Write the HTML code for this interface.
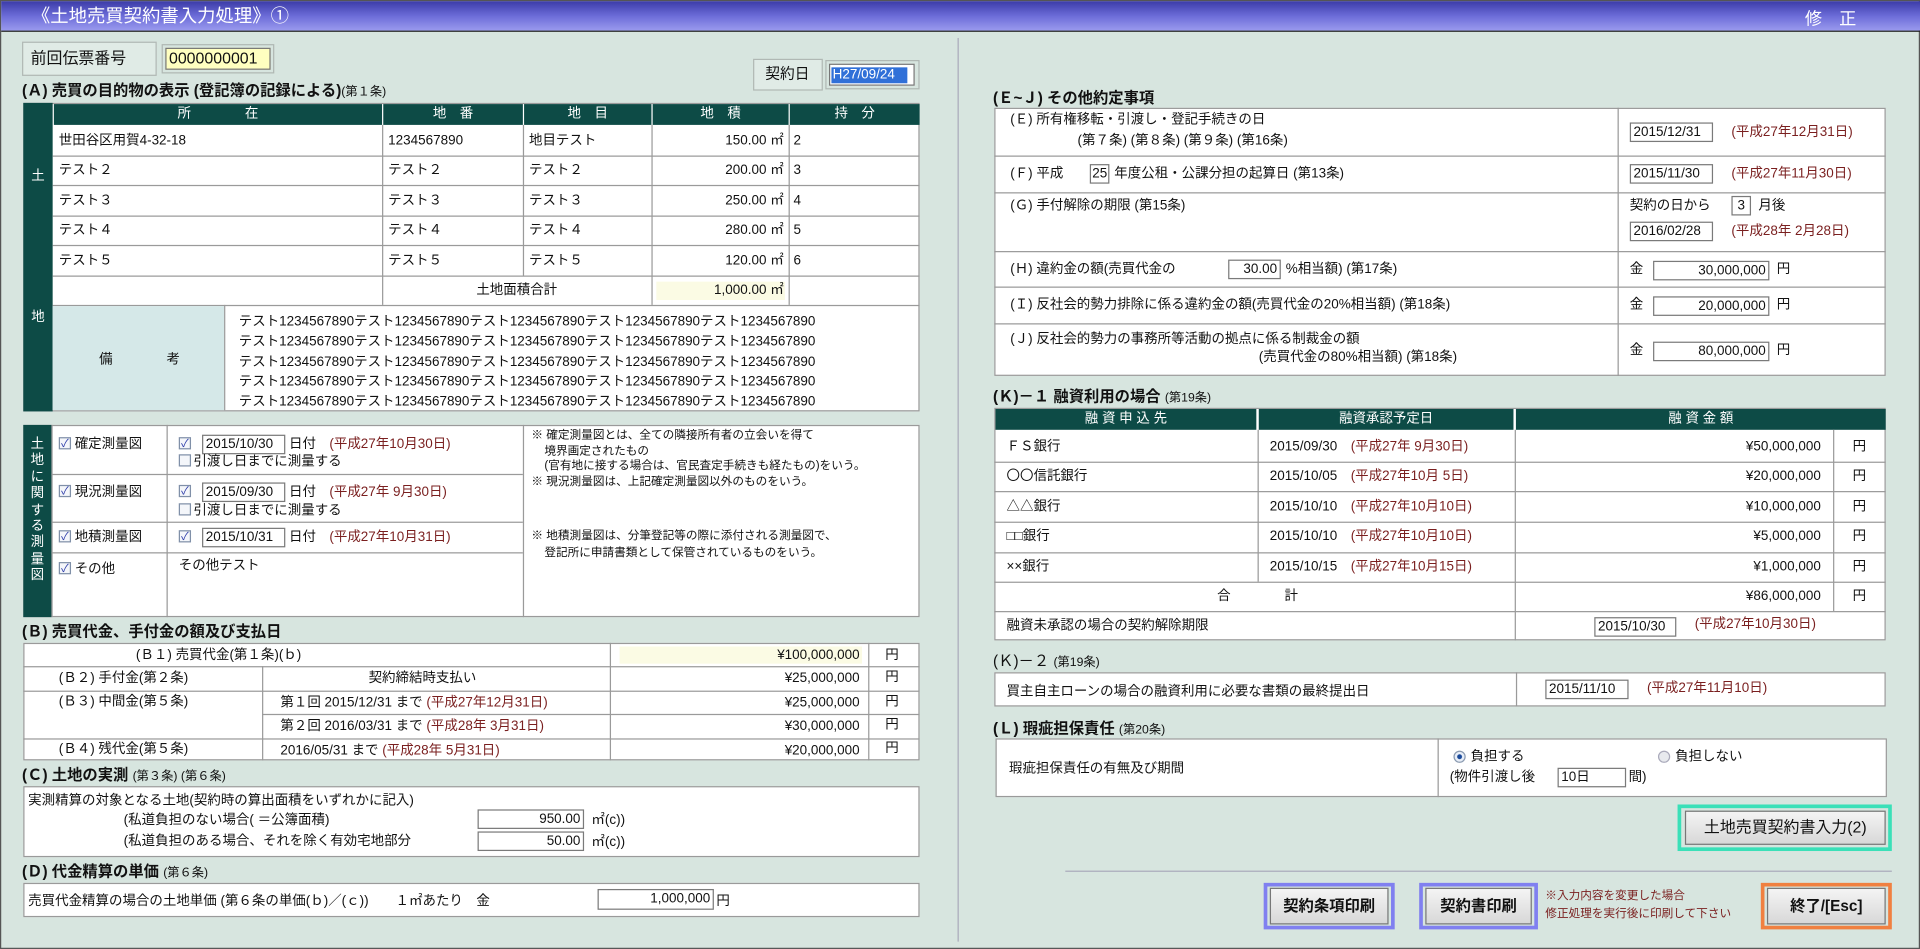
<!DOCTYPE html>
<html><head><meta charset="utf-8"><style>
*{margin:0;padding:0;box-sizing:border-box}
html,body{width:1920px;height:949px;overflow:hidden;background:#d7e5df}
#w{position:absolute;left:0;top:0;width:1568px;height:775px;transform:scale(1.22449);transform-origin:0 0;background:#d7e5df;font-family:"Liberation Sans","Noto Sans CJK JP",sans-serif;color:#111;border:1px solid #555}
.a{position:absolute}
.t{position:absolute;white-space:nowrap;font-size:11px;line-height:12px}
.h{position:absolute;white-space:nowrap;font-size:12.5px;line-height:14px;font-weight:bold}
.h small{font-size:10px;font-weight:normal}
.r{color:#7a1f1f}
.wb{position:absolute;background:#fff;border:1px solid #9a9a9a}
.hl{position:absolute;height:1px;background:#9a9a9a}
.vl{position:absolute;width:1px;background:#9a9a9a}
.tl{position:absolute;background:#0d4b46}
.ht{position:absolute;color:#fff;font-size:11px;line-height:18px;text-align:center}
.in{position:absolute;background:#fff;border:1px solid #7a7a7a;font-size:11px;line-height:14px;padding:0 2px;white-space:nowrap}
.cb{position:absolute;width:10px;height:10px;border:1px solid #8090a8;background:#f4f6fa;font-size:9px;line-height:8px;color:#2a3aa8;text-align:center}
.rt{position:absolute;white-space:nowrap;font-size:11px;line-height:12px;text-align:right}
.btn{position:absolute;background:linear-gradient(#f4f4f4,#d8d8d8);border:1px solid #777;font-size:12.5px;font-weight:bold;text-align:center}
</style></head><body><div id="w">
<!-- title -->
<div class="a" style="left:0;top:0;width:1568px;height:25px;background:linear-gradient(#3c3ca8,#6c6cd8 50%,#9a9aee);border-bottom:1px solid #222"></div>
<div class="a" style="left:25px;top:4px;color:#fff;font-size:15px;line-height:17px;white-space:nowrap">《土地売買契約書入力処理》①</div>
<div class="a" style="left:1473px;top:6px;color:#fff;font-size:14px;line-height:16px;white-space:nowrap">修　正</div>
<div class="vl" style="left:781px;top:30px;height:738px;background:#aab"></div>

<!-- header inputs -->
<div class="a" style="left:17px;top:33px;width:110px;height:28px;border:1px solid #b0b8b4;background:#e0ebe6"></div>
<div class="t" style="left:24px;top:40px;font-size:13px;line-height:14px">前回伝票番号</div>
<div class="a" style="left:131px;top:35px;width:92px;height:24px;border:1px solid #b0b8b4"></div>
<div class="a" style="left:134px;top:38px;width:86px;height:18px;background:#ffffc0;border:1px solid #777;font-size:13px;line-height:16px;padding-left:2px">0000000001</div>
<div class="a" style="left:614px;top:47px;width:57px;height:26px;border:1px solid #b0b8b4;background:#e0ebe6"></div>
<div class="t" style="left:624px;top:53px;font-size:12px;line-height:13px">契約日</div>
<div class="a" style="left:673px;top:48px;width:77px;height:24px;border:1px solid #b0b8b4"></div>
<div class="a" style="left:676px;top:51px;width:70px;height:18px;background:#fff;border:1px solid #777"></div>
<div class="a" style="left:678px;top:54px;width:62px;height:13px;background:#3070d8;color:#fff;font-size:11px;line-height:13px;padding-left:1px">H27/09/24</div>

<!-- (A) -->
<div class="h" style="left:17px;top:66px">(Ａ) 売買の目的物の表示 (登記簿の記録による)<small>(第１条)</small></div>
<div class="wb" style="left:18px;top:83px;width:732px;height:252px"></div>
<div class="tl" style="left:18px;top:83px;width:24px;height:252px"></div>
<div class="ht" style="left:18px;top:134px;width:24px">土</div>
<div class="ht" style="left:18px;top:249px;width:24px">地</div>
<div class="tl" style="left:43px;top:84px;width:268px;height:17px"></div>
<div class="tl" style="left:312px;top:84px;width:114px;height:17px"></div>
<div class="tl" style="left:427px;top:84px;width:104px;height:17px"></div>
<div class="tl" style="left:532px;top:84px;width:111px;height:17px"></div>
<div class="tl" style="left:644px;top:84px;width:106px;height:17px"></div>
<div class="ht" style="left:43px;top:83px;width:268px">所　　　　在</div>
<div class="ht" style="left:312px;top:83px;width:114px">地　番</div>
<div class="ht" style="left:427px;top:83px;width:104px">地　目</div>
<div class="ht" style="left:532px;top:83px;width:111px">地　積</div>
<div class="ht" style="left:644px;top:83px;width:106px">持　分</div>
<div class="hl" style="left:42px;top:126px;width:708px"></div>
<div class="hl" style="left:42px;top:150px;width:708px"></div>
<div class="hl" style="left:42px;top:175px;width:708px"></div>
<div class="hl" style="left:42px;top:199px;width:708px"></div>
<div class="hl" style="left:42px;top:224px;width:708px"></div>
<div class="hl" style="left:42px;top:248px;width:708px"></div>
<div class="vl" style="left:311px;top:101px;height:147px"></div>
<div class="vl" style="left:426px;top:101px;height:123px"></div>
<div class="vl" style="left:531px;top:101px;height:147px"></div>
<div class="vl" style="left:643px;top:101px;height:147px"></div>
<div class="t" style="left:47px;top:108px">世田谷区用賀4-32-18</div><div class="t" style="left:316px;top:108px">1234567890</div><div class="t" style="left:431px;top:108px">地目テスト</div><div class="rt" style="left:540px;width:99px;top:108px">150.00 ㎡</div><div class="t" style="left:647px;top:108px">2</div>
<div class="t" style="left:47px;top:132px">テスト２</div><div class="t" style="left:316px;top:132px">テスト２</div><div class="t" style="left:431px;top:132px">テスト２</div><div class="rt" style="left:540px;width:99px;top:132px">200.00 ㎡</div><div class="t" style="left:647px;top:132px">3</div>
<div class="t" style="left:47px;top:157px">テスト３</div><div class="t" style="left:316px;top:157px">テスト３</div><div class="t" style="left:431px;top:157px">テスト３</div><div class="rt" style="left:540px;width:99px;top:157px">250.00 ㎡</div><div class="t" style="left:647px;top:157px">4</div>
<div class="t" style="left:47px;top:181px">テスト４</div><div class="t" style="left:316px;top:181px">テスト４</div><div class="t" style="left:431px;top:181px">テスト４</div><div class="rt" style="left:540px;width:99px;top:181px">280.00 ㎡</div><div class="t" style="left:647px;top:181px">5</div>
<div class="t" style="left:47px;top:206px">テスト５</div><div class="t" style="left:316px;top:206px">テスト５</div><div class="t" style="left:431px;top:206px">テスト５</div><div class="rt" style="left:540px;width:99px;top:206px">120.00 ㎡</div><div class="t" style="left:647px;top:206px">6</div>
<div class="a" style="left:535px;top:229px;width:105px;height:15px;background:#fbfbe4"></div>
<div class="t" style="left:388px;top:230px">土地面積合計</div><div class="rt" style="left:540px;width:99px;top:230px">1,000.00 ㎡</div>
<div class="a" style="left:42px;top:249px;width:140px;height:85px;background:#d5e8e8"></div>
<div class="vl" style="left:182px;top:248px;height:86px"></div>
<div class="t" style="left:80px;top:287px">備　　　　考</div>
<div class="t" style="left:194px;top:254px;line-height:16.3px">テスト1234567890テスト1234567890テスト1234567890テスト1234567890テスト1234567890<br>テスト1234567890テスト1234567890テスト1234567890テスト1234567890テスト1234567890<br>テスト1234567890テスト1234567890テスト1234567890テスト1234567890テスト1234567890<br>テスト1234567890テスト1234567890テスト1234567890テスト1234567890テスト1234567890<br>テスト1234567890テスト1234567890テスト1234567890テスト1234567890テスト1234567890</div>

<!-- survey -->
<div class="wb" style="left:18px;top:346px;width:732px;height:157px"></div>
<div class="tl" style="left:18px;top:346px;width:23px;height:157px"></div>
<div class="a" style="left:18px;top:356px;width:23px;color:#fff;font-size:11px;line-height:13.4px;text-align:center">土<br>地<br>に<br>関<br>す<br>る<br>測<br>量<br>図</div>
<div class="vl" style="left:41px;top:346px;height:157px"></div>
<div class="vl" style="left:135px;top:346px;height:157px"></div>
<div class="vl" style="left:426px;top:346px;height:157px"></div>
<div class="hl" style="left:41px;top:386px;width:385px"></div>
<div class="hl" style="left:41px;top:425px;width:385px"></div>
<div class="hl" style="left:41px;top:450px;width:385px"></div>
<div class="cb" style="left:47px;top:356px">✓</div><div class="t" style="left:60px;top:356px">確定測量図</div>
<div class="cb" style="left:145px;top:356px">✓</div><div class="in" style="left:164px;top:354px;width:68px">2015/10/30</div><div class="t" style="left:235px;top:356px">日付　<span class="r">(平成27年10月30日)</span></div>
<div class="cb" style="left:145px;top:370px"></div><div class="t" style="left:157px;top:370px">引渡し日までに測量する</div>
<div class="cb" style="left:47px;top:395px">✓</div><div class="t" style="left:60px;top:395px">現況測量図</div>
<div class="cb" style="left:145px;top:395px">✓</div><div class="in" style="left:164px;top:393px;width:68px">2015/09/30</div><div class="t" style="left:235px;top:395px">日付　<span class="r">(平成27年 9月30日)</span></div>
<div class="cb" style="left:145px;top:410px"></div><div class="t" style="left:157px;top:410px">引渡し日までに測量する</div>
<div class="cb" style="left:47px;top:432px">✓</div><div class="t" style="left:60px;top:432px">地積測量図</div>
<div class="cb" style="left:145px;top:432px">✓</div><div class="in" style="left:164px;top:430px;width:68px">2015/10/31</div><div class="t" style="left:235px;top:432px">日付　<span class="r">(平成27年10月31日)</span></div>
<div class="cb" style="left:47px;top:458px">✓</div><div class="t" style="left:60px;top:458px">その他</div>
<div class="t" style="left:145px;top:455px">その他テスト</div>
<div class="t" style="left:433px;top:349px;font-size:9.5px;line-height:12.5px">※ 確定測量図とは、全ての隣接所有者の立会いを得て<br>&nbsp;&nbsp;&nbsp;&nbsp;境界画定されたもの<br>&nbsp;&nbsp;&nbsp;&nbsp;(官有地に接する場合は、官民査定手続きも経たもの)をいう。<br>※ 現況測量図は、上記確定測量図以外のものをいう。</div>
<div class="t" style="left:433px;top:430px;font-size:9.5px;line-height:14px">※ 地積測量図は、分筆登記等の際に添付される測量図で、<br>&nbsp;&nbsp;&nbsp;&nbsp;登記所に申請書類として保管されているものをいう。</div>

<!-- (B) -->
<div class="h" style="left:17px;top:508px">(Ｂ) 売買代金、手付金の額及び支払日</div>
<div class="wb" style="left:18px;top:524px;width:732px;height:96px"></div>
<div class="hl" style="left:18px;top:543px;width:732px"></div>
<div class="hl" style="left:18px;top:563px;width:732px"></div>
<div class="hl" style="left:213px;top:582px;width:537px"></div>
<div class="hl" style="left:18px;top:602px;width:732px"></div>
<div class="vl" style="left:213px;top:543px;height:77px"></div>
<div class="vl" style="left:497px;top:524px;height:96px"></div>
<div class="vl" style="left:708px;top:524px;height:96px"></div>
<div class="a" style="left:505px;top:527px;width:198px;height:14px;background:#fbfbe4"></div>
<div class="t" style="left:110px;top:528px">(Ｂ１) 売買代金(第１条)(ｂ)</div><div class="rt" style="left:560px;width:141px;top:528px">¥100,000,000</div><div class="t" style="left:722px;top:528px">円</div>
<div class="t" style="left:47px;top:547px">(Ｂ２) 手付金(第２条)</div><div class="t" style="left:300px;top:547px">契約締結時支払い</div><div class="rt" style="left:560px;width:141px;top:547px">¥25,000,000</div><div class="t" style="left:722px;top:546px">円</div>
<div class="t" style="left:47px;top:566px">(Ｂ３) 中間金(第５条)</div><div class="t" style="left:228px;top:567px">第１回 2015/12/31 まで <span class="r">(平成27年12月31日)</span></div><div class="rt" style="left:560px;width:141px;top:567px">¥25,000,000</div><div class="t" style="left:722px;top:566px">円</div>
<div class="t" style="left:228px;top:586px">第２回 2016/03/31 まで <span class="r">(平成28年 3月31日)</span></div><div class="rt" style="left:560px;width:141px;top:586px">¥30,000,000</div><div class="t" style="left:722px;top:585px">円</div>
<div class="t" style="left:47px;top:605px">(Ｂ４) 残代金(第５条)</div><div class="t" style="left:228px;top:606px">2016/05/31 まで <span class="r">(平成28年 5月31日)</span></div><div class="rt" style="left:560px;width:141px;top:606px">¥20,000,000</div><div class="t" style="left:722px;top:604px">円</div>

<!-- (C) -->
<div class="h" style="left:17px;top:625px">(Ｃ) 土地の実測 <small>(第３条) (第６条)</small></div>
<div class="wb" style="left:18px;top:641px;width:732px;height:58px"></div>
<div class="t" style="left:22px;top:647px">実測精算の対象となる土地(契約時の算出面積をいずれかに記入)</div>
<div class="t" style="left:100px;top:663px">(私道負担のない場合( ＝公簿面積)</div>
<div class="t" style="left:100px;top:680px">(私道負担のある場合、それを除く有効宅地部分</div>
<div class="in" style="left:389px;top:660px;width:87px;height:16px;text-align:right">950.00</div><div class="t" style="left:482px;top:663px">㎡(c))</div>
<div class="in" style="left:389px;top:678px;width:87px;height:16px;text-align:right">50.00</div><div class="t" style="left:482px;top:681px">㎡(c))</div>

<!-- (D) -->
<div class="h" style="left:17px;top:704px">(Ｄ) 代金精算の単価 <small>(第６条)</small></div>
<div class="wb" style="left:18px;top:720px;width:732px;height:28px"></div>
<div class="t" style="left:22px;top:729px">売買代金精算の場合の土地単価 (第６条の単価(ｂ)／(ｃ))　　１㎡あたり　金</div>
<div class="in" style="left:487px;top:725px;width:95px;height:17px;text-align:right">1,000,000</div><div class="t" style="left:584px;top:729px">円</div>

<!-- (E~J) -->
<div class="h" style="left:810px;top:72px">(Ｅ~Ｊ) その他約定事項</div>
<div class="wb" style="left:811px;top:87px;width:728px;height:219px"></div>
<div class="vl" style="left:1320px;top:87px;height:219px"></div>
<div class="hl" style="left:811px;top:126px;width:728px"></div>
<div class="hl" style="left:811px;top:156px;width:728px"></div>
<div class="hl" style="left:811px;top:204px;width:728px"></div>
<div class="hl" style="left:811px;top:233px;width:728px"></div>
<div class="hl" style="left:811px;top:263px;width:728px"></div>
<div class="t" style="left:824px;top:91px">(Ｅ) 所有権移転・引渡し・登記手続きの日</div>
<div class="t" style="left:879px;top:108px">(第７条) (第８条) (第９条) (第16条)</div>
<div class="in" style="left:1330px;top:99px;width:68px;height:16px">2015/12/31</div><div class="t r" style="left:1413px;top:101px">(平成27年12月31日)</div>
<div class="t" style="left:824px;top:135px">(Ｆ) 平成 </div><div class="in" style="left:889px;top:133px;width:16px;height:16px;padding:0 1px">25</div><div class="t" style="left:909px;top:135px">年度公租・公課分担の起算日 (第13条)</div>
<div class="in" style="left:1330px;top:133px;width:68px;height:16px">2015/11/30</div><div class="t r" style="left:1413px;top:135px">(平成27年11月30日)</div>
<div class="t" style="left:824px;top:161px">(Ｇ) 手付解除の期限 (第15条)</div>
<div class="t" style="left:1330px;top:161px">契約の日から</div><div class="in" style="left:1413px;top:159px;width:16px;height:16px;text-align:center;padding:0">3</div><div class="t" style="left:1435px;top:161px">月後</div>
<div class="in" style="left:1330px;top:180px;width:68px;height:16px">2016/02/28</div><div class="t r" style="left:1413px;top:182px">(平成28年 2月28日)</div>
<div class="t" style="left:824px;top:213px">(Ｈ) 違約金の額(売買代金の</div><div class="in" style="left:1002px;top:211px;width:43px;height:16px;text-align:right">30.00</div><div class="t" style="left:1049px;top:213px">%相当額) (第17条)</div>
<div class="t" style="left:1330px;top:213px">金</div><div class="in" style="left:1349px;top:212px;width:95px;height:16px;text-align:right">30,000,000</div><div class="t" style="left:1450px;top:213px">円</div>
<div class="t" style="left:824px;top:242px">(Ｉ) 反社会的勢力排除に係る違約金の額(売買代金の20%相当額) (第18条)</div>
<div class="t" style="left:1330px;top:242px">金</div><div class="in" style="left:1349px;top:241px;width:95px;height:16px;text-align:right">20,000,000</div><div class="t" style="left:1450px;top:242px">円</div>
<div class="t" style="left:824px;top:270px">(Ｊ) 反社会的勢力の事務所等活動の拠点に係る制裁金の額</div>
<div class="t" style="left:1027px;top:285px">(売買代金の80%相当額) (第18条)</div>
<div class="t" style="left:1330px;top:279px">金</div><div class="in" style="left:1349px;top:278px;width:95px;height:16px;text-align:right">80,000,000</div><div class="t" style="left:1450px;top:279px">円</div>

<!-- (K)-1 -->
<div class="h" style="left:810px;top:316px">(Ｋ)－１ 融資利用の場合 <small>(第19条)</small></div>
<div class="wb" style="left:811px;top:332px;width:728px;height:190px"></div>
<div class="tl" style="left:812px;top:333px;width:213px;height:17px"></div>
<div class="tl" style="left:1027px;top:333px;width:208px;height:17px"></div>
<div class="tl" style="left:1237px;top:333px;width:302px;height:17px"></div>
<div class="ht" style="left:812px;top:332px;width:213px">融 資 申 込 先</div>
<div class="ht" style="left:1027px;top:332px;width:208px">融資承認予定日</div>
<div class="ht" style="left:1237px;top:332px;width:302px">融 資 金 額</div>
<div class="hl" style="left:811px;top:376px;width:728px"></div>
<div class="hl" style="left:811px;top:400px;width:728px"></div>
<div class="hl" style="left:811px;top:425px;width:728px"></div>
<div class="hl" style="left:811px;top:450px;width:728px"></div>
<div class="hl" style="left:811px;top:474px;width:728px"></div>
<div class="hl" style="left:811px;top:498px;width:728px"></div>
<div class="vl" style="left:1026px;top:350px;height:124px"></div>
<div class="vl" style="left:1236px;top:350px;height:172px"></div>
<div class="vl" style="left:1496px;top:350px;height:148px"></div>
<div class="t" style="left:821px;top:358px">ＦＳ銀行</div><div class="t" style="left:1036px;top:358px">2015/09/30　<span class="r">(平成27年 9月30日)</span></div><div class="rt" style="left:1380px;width:106px;top:358px">¥50,000,000</div><div class="t" style="left:1512px;top:358px">円</div>
<div class="t" style="left:821px;top:382px">〇〇信託銀行</div><div class="t" style="left:1036px;top:382px">2015/10/05　<span class="r">(平成27年10月 5日)</span></div><div class="rt" style="left:1380px;width:106px;top:382px">¥20,000,000</div><div class="t" style="left:1512px;top:382px">円</div>
<div class="t" style="left:821px;top:407px">△△銀行</div><div class="t" style="left:1036px;top:407px">2015/10/10　<span class="r">(平成27年10月10日)</span></div><div class="rt" style="left:1380px;width:106px;top:407px">¥10,000,000</div><div class="t" style="left:1512px;top:407px">円</div>
<div class="t" style="left:821px;top:431px">□□銀行</div><div class="t" style="left:1036px;top:431px">2015/10/10　<span class="r">(平成27年10月10日)</span></div><div class="rt" style="left:1380px;width:106px;top:431px">¥5,000,000</div><div class="t" style="left:1512px;top:431px">円</div>
<div class="t" style="left:821px;top:456px">××銀行</div><div class="t" style="left:1036px;top:456px">2015/10/15　<span class="r">(平成27年10月15日)</span></div><div class="rt" style="left:1380px;width:106px;top:456px">¥1,000,000</div><div class="t" style="left:1512px;top:456px">円</div>
<div class="t" style="left:993px;top:480px">合　　　　計</div><div class="rt" style="left:1380px;width:106px;top:480px">¥86,000,000</div><div class="t" style="left:1512px;top:480px">円</div>
<div class="t" style="left:821px;top:504px">融資未承認の場合の契約解除期限</div>
<div class="in" style="left:1301px;top:503px;width:67px;height:16px">2015/10/30</div><div class="t r" style="left:1383px;top:503px">(平成27年10月30日)</div>

<!-- (K)-2 -->
<div class="h" style="left:810px;top:532px;font-weight:normal">(Ｋ)－２ <small>(第19条)</small></div>
<div class="wb" style="left:811px;top:548px;width:728px;height:28px"></div>
<div class="vl" style="left:1237px;top:548px;height:28px"></div>
<div class="t" style="left:821px;top:558px">買主自主ローンの場合の融資利用に必要な書類の最終提出日</div>
<div class="in" style="left:1261px;top:554px;width:68px;height:16px">2015/11/10</div><div class="t r" style="left:1344px;top:555px">(平成27年11月10日)</div>

<!-- (L) -->
<div class="h" style="left:810px;top:587px">(Ｌ) 瑕疵担保責任 <small>(第20条)</small></div>
<div class="wb" style="left:812px;top:602px;width:728px;height:48px"></div>
<div class="vl" style="left:1173px;top:602px;height:48px"></div>
<div class="t" style="left:823px;top:621px">瑕疵担保責任の有無及び期間</div>
<div class="a" style="left:1186px;top:612px;width:10px;height:10px;border-radius:50%;border:1px solid #8a9ab0;background:radial-gradient(#1a4a9a 30%,#e8eef8 40%)"></div><div class="t" style="left:1200px;top:611px">負担する</div>
<div class="a" style="left:1353px;top:612px;width:10px;height:10px;border-radius:50%;border:1px solid #aab;background:#e8eaee"></div><div class="t" style="left:1367px;top:611px">負担しない</div>
<div class="t" style="left:1183px;top:628px">(物件引渡し後</div><div class="in" style="left:1271px;top:626px;width:56px;height:16px">10日</div><div class="t" style="left:1329px;top:628px">間)</div>

<!-- buttons -->
<div class="a" style="left:1369px;top:656px;width:175px;height:38px;border:3px solid #3ae0b8"></div>
<div class="btn" style="left:1375px;top:661px;width:164px;height:28px;line-height:26px;font-weight:normal;font-size:13px">土地売買契約書入力(2)</div>
<div class="hl" style="left:869px;top:710px;width:675px;background:#aab"></div>
<div class="a" style="left:1031px;top:720px;width:107px;height:38px;border:3px solid #8080f0"></div>
<div class="btn" style="left:1036px;top:724px;width:97px;height:30px;line-height:28px">契約条項印刷</div>
<div class="a" style="left:1158px;top:720px;width:97px;height:38px;border:3px solid #8080f0"></div>
<div class="btn" style="left:1163px;top:724px;width:87px;height:30px;line-height:28px">契約書印刷</div>
<div class="t r" style="left:1261px;top:723px;font-size:9.5px;line-height:15px">※入力内容を変更した場合<br>修正処理を実行後に印刷して下さい</div>
<div class="a" style="left:1437px;top:720px;width:107px;height:38px;border:3px solid #f08040"></div>
<div class="btn" style="left:1442px;top:724px;width:97px;height:30px;line-height:28px">終了/[Esc]</div>
</div></body></html>
